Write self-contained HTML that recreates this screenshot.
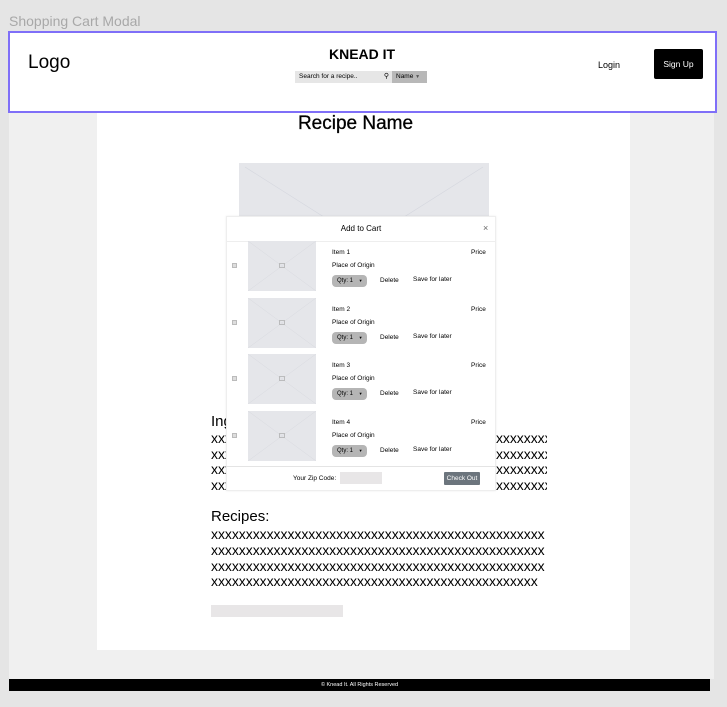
<!DOCTYPE html>
<html><head><meta charset="utf-8"><style>
*{margin:0;padding:0;box-sizing:border-box}
body{width:727px;height:707px;background:#e5e5e5;font-family:"Liberation Sans",sans-serif;position:relative;overflow:hidden;color:#000}
.a{position:absolute}
.xs{font-size:14px;line-height:16px;white-space:nowrap;overflow:hidden;width:336px;left:211px;letter-spacing:-0.05px}
.t{font-size:6.5px;white-space:nowrap}
.qty{background:#b5b5b5;border-radius:4px;width:35px;height:12px;font-size:6px;line-height:12px;padding-left:5px}
</style></head><body>
<div class="a" style="left:9px;top:13px;font-size:14px;color:#a8a8a8">Shopping Cart Modal</div>
<div class="a" style="left:9px;top:112px;width:705px;height:567px;background:#f0f0f0"></div>
<div class="a" style="left:97px;top:112px;width:533px;height:538px;background:#fff"></div>
<div class="a" style="left:8px;top:31px;width:709px;height:82px;background:#fff;border:2px solid #7f6ff8"></div>
<div class="a" style="left:28px;top:52px;font-size:19px">Logo</div>
<div class="a" style="left:329px;top:46px;font-size:14px;font-weight:bold">KNEAD IT</div>
<div class="a" style="left:295px;top:71px;width:97px;height:12px;background:#e6e6e6;font-size:6.5px;line-height:12px;padding-left:4px">Search for a recipe..<span style="position:absolute;right:3px;font-size:7px">&#9906;</span></div>
<div class="a" style="left:392px;top:71px;width:35px;height:12px;background:#b8b8b8;font-size:6.5px;line-height:12px;padding-left:4px">Name <span style="font-size:5px;color:#555">&#9660;</span></div>
<div class="a" style="left:598px;top:60px;font-size:9px">Login</div>
<div class="a" style="left:654px;top:49px;width:49px;height:30px;background:#000;color:#fff;font-size:8.5px;line-height:30px;text-align:center;border-radius:2px">Sign Up</div>
<div class="a" style="left:97px;top:113px;width:517px;text-align:center;font-size:19px;-webkit-text-stroke:0.3px #000">Recipe Name</div>
<svg class="a" style="left:239px;top:163px" width="250" height="60"><rect width="250" height="60" fill="#e5e6ea"/><line x1="6" y1="4" x2="126" y2="80" stroke="#d4d6de" stroke-width=".6"/><line x1="244" y1="4" x2="124" y2="80" stroke="#d4d6de" stroke-width=".6"/></svg>
<div class="a" style="left:211px;top:413px;font-size:15px">Ingredients:</div>
<div class="a xs" style="top:430px">xxxxxxxxxxxxxxxxxxxxxxxxxxxxxxxxxxxxxxxxxxxxxxxxxx</div>
<div class="a xs" style="top:446px">xxxxxxxxxxxxxxxxxxxxxxxxxxxxxxxxxxxxxxxxxxxxxxxxxx</div>
<div class="a xs" style="top:461px">xxxxxxxxxxxxxxxxxxxxxxxxxxxxxxxxxxxxxxxxxxxxxxxxxx</div>
<div class="a xs" style="top:477px">xxxxxxxxxxxxxxxxxxxxxxxxxxxxxxxxxxxxxxxxxxxxxxxxxx</div>
<div class="a" style="left:211px;top:508px;font-size:15px">Recipes:</div>
<div class="a xs" style="top:526px;width:335px">xxxxxxxxxxxxxxxxxxxxxxxxxxxxxxxxxxxxxxxxxxxxxxxx</div>
<div class="a xs" style="top:542px;width:335px">xxxxxxxxxxxxxxxxxxxxxxxxxxxxxxxxxxxxxxxxxxxxxxxx</div>
<div class="a xs" style="top:558px;width:335px">xxxxxxxxxxxxxxxxxxxxxxxxxxxxxxxxxxxxxxxxxxxxxxxx</div>
<div class="a xs" style="top:573px;width:330px">xxxxxxxxxxxxxxxxxxxxxxxxxxxxxxxxxxxxxxxxxxxxxxx</div>
<div class="a" style="left:211px;top:605px;width:132px;height:12px;background:#e8e6e7"></div>
<div class="a" style="left:226px;top:216px;width:270px;height:275px;background:#fff;border:1px solid #eee;box-shadow:0 0 2px rgba(0,0,0,.08)"></div>
<div class="a" style="left:226px;top:224px;width:270px;text-align:center;font-size:8px">Add to Cart</div>
<div class="a" style="left:483px;top:223px;font-size:9px;color:#666">×</div>
<div class="a" style="left:226px;top:241px;width:270px;height:1px;background:#eee"></div>
<div class="a" style="left:226px;top:466px;width:270px;height:1px;background:#e4e4e4"></div>
<div id="items"></div>
<div class="a t" style="left:293px;top:475px">Your Zip Code:</div>
<div class="a" style="left:340px;top:472px;width:42px;height:12px;background:#e8e6e7"></div>
<div class="a" style="left:444px;top:472px;width:36px;height:13px;background:#6c757d;color:#fff;font-size:6.5px;line-height:13px;text-align:center;border-radius:1px">Check Out</div>
<div class="a" style="left:9px;top:679px;width:701px;height:12px;background:#000;color:#fff;font-size:5.5px;line-height:12px;text-align:center">© Knead It. All Rights Reserved</div>
<script>
var h='';for(var i=0;i<4;i++){var y=241+i*56.7;
h+='<svg class="a" style="left:248px;top:'+y+'px" width="68" height="50"><rect width="68" height="50" fill="#e5e6ea"/><line x1="0" y1="0" x2="68" y2="50" stroke="#d8d9df" stroke-width=".5"/><line x1="68" y1="0" x2="0" y2="50" stroke="#d8d9df" stroke-width=".5"/><rect x="31.5" y="22.5" width="5" height="4" fill="none" stroke="#aaa" stroke-width=".7"/></svg>';
h+='<div class="a" style="left:232px;top:'+(y+22)+'px;width:5px;height:5px;border:1px solid #bbb;background:#ddd"></div>';
h+='<div class="a t" style="left:332px;top:'+(y+8)+'px">Item '+(i+1)+'</div>';
h+='<div class="a t" style="left:471px;top:'+(y+8)+'px">Price</div>';
h+='<div class="a t" style="left:332px;top:'+(y+21)+'px">Place of Origin</div>';
h+='<div class="a qty" style="left:332px;top:'+(y+34)+'px">Qty: 1 <span style="font-size:4px;margin-left:4px">&#9660;</span></div>';
h+='<div class="a t" style="left:380px;top:'+(y+36)+'px">Delete</div>';
h+='<div class="a t" style="left:413px;top:'+(y+35)+'px">Save for later</div>';}
document.getElementById('items').innerHTML=h;
</script>
</body></html>
